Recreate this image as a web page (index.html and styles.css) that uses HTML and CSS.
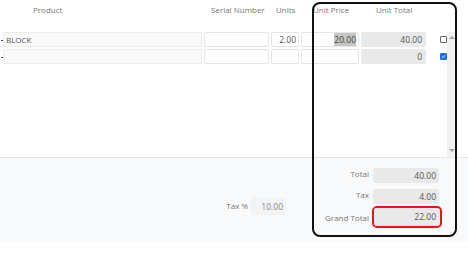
FILE: index.html
```html
<!DOCTYPE html>
<html>
<head>
<meta charset="utf-8">
<link rel="stylesheet" href="styles.css">
</head>
<body>
<div class="page">
  <div class="head cols">
    <div class="h h-product">Product</div>
    <div class="h h-serial">Serial Number</div>
    <div class="h h-units">Units</div>
    <div class="h h-price">Unit Price</div>
    <div class="h h-total">Unit Total</div>
  </div>
  <div class="body">
    <div class="rows">
      <div class="row cols">
        <div class="cell product"><span class="handle"></span>BLOCK</div>
        <div class="cell plain"></div>
        <div class="cell plain num">2.00</div>
        <div class="cell plain num"><span class="sel">20.00</span></div>
        <div class="cell ro num">40.00</div>
        <div class="chk"><span class="box"></span></div>
      </div>
      <div class="row cols">
        <div class="cell product"><span class="handle"></span></div>
        <div class="cell plain"></div>
        <div class="cell plain num"></div>
        <div class="cell plain num"></div>
        <div class="cell ro num">0</div>
        <div class="chk"><span class="box on"><svg viewBox="0 0 8 8" width="7" height="7"><path d="M1.5 4.2 L3.2 5.8 L6.6 2" fill="none" stroke="#fff" stroke-width="1.4"/></svg></span></div>
      </div>
    </div>
    <div class="scrollbar"><span class="arr up"></span><span class="arr down"></span></div>
  </div>
  <div class="footer">
    <div class="taxgroup">
      <span class="lbl">Tax %</span>
      <div class="field tax-in">10.00</div>
    </div>
    <div class="totals">
      <span class="lbl">Total</span>
      <div class="field">40.00</div>
      <span class="lbl">Tax</span>
      <div class="field">4.00</div>
      <span class="lbl">Grand Total</span>
      <div class="redwrap"><div class="field grand">22.00</div></div>
    </div>
  </div>
  <div class="highlight"></div>
</div>
</body>
</html>
```
FILE: styles.css
```css
* { box-sizing: border-box; }
html, body { margin: 0; padding: 0; background: #fff; }
body { font-family: "Open Sans", "Liberation Sans", sans-serif; color: #555; }
.page { position: relative; width: 468px; height: 279px; overflow: hidden; }

.cols {
  display: grid;
  grid-template-columns: 199px 65px 28px 58px 65px 1fr;
  column-gap: 2px;
}
.head { height: 32px; padding-left: 3px; padding-right: 21px; }
.h { font-size: 8px; color: #777; padding-top: 4px; line-height: 12px; white-space: nowrap; }
.h-product { padding-left: 30px; }
.h-serial { padding-left: 7px; }
.h-units { padding-left: 5px; }
.h-price { padding-left: 12px; }
.h-total { padding-left: 15px; }

.body { display: flex; height: 125px; }
.rows { flex: 1; padding-left: 3px; display: flex; flex-direction: column; gap: 2px; }
.row { height: 15px; }
.cell {
  height: 15px;
  font-size: 8.5px;
  line-height: 13px;
  border-radius: 2px;
  white-space: nowrap;
}
.product {
  position: relative;
  background: #f9f9f9;
  border: 1px solid #ececec;
  padding-left: 2px;
  font-size: 8px;
  color: #555;
}
.handle {
  position: absolute;
  left: -3px;
  top: 7px;
  width: 2px;
  height: 1px;
  background: #3b4a6b;
}
.plain { background: #fff; border: 1px solid #e4e4e4; }
.num { text-align: right; padding-right: 2px; }
.ro { background: #e9e9e9; border: 1px solid #e9e9e9; padding-right: 3px; }
.sel { background: #c6c6c6; color: #444; padding: 1px 0; }
.chk { display: flex; align-items: center; padding-left: 12px; }
.box {
  width: 7px; height: 7px;
  border: 1px solid #666;
  border-radius: 1px;
  background: #fff;
  display: flex; align-items: center; justify-content: center;
}
.box.on { background: #1a6fe0; border-color: #1a6fe0; }
.box svg { display: block; }

.scrollbar {
  width: 9px;
  margin-right: 12px;
  background: #f1f1f1;
  display: flex; flex-direction: column; justify-content: space-between; align-items: center;
  padding: 4px 0 5px;
}
.arr { width: 0; height: 0; border-left: 3px solid transparent; border-right: 3px solid transparent; }
.up { border-bottom: 3px solid #a3a3a3; }
.down { border-top: 3px solid #a3a3a3; }

.footer {
  height: 85px;
  border-top: 1px solid #e4e4e4;
  background: #f8f9fa;
  display: flex;
  justify-content: flex-end;
  align-items: flex-start;
  padding: 10px 29px 0 0;
}
.lbl { font-size: 8px; color: #777; line-height: 12px; white-space: nowrap; }
.field {
  height: 15px;
  background: #e9e9e9;
  border-radius: 3px;
  font-size: 8.5px;
  line-height: 15px;
  text-align: right;
  padding-right: 3px;
  color: #555;
}
.taxgroup { display: flex; align-items: flex-start; gap: 3px; margin-top: 30px; margin-right: 39px; }
.taxgroup .lbl { padding-top: 2px; }
.tax-in { width: 35px; height: 17px; line-height: 17px; background: #f2f3f4; color: #888; }
.totals {
  display: grid;
  grid-template-columns: auto 66px;
  column-gap: 4px;
  row-gap: 6px;
  align-items: center;
}
.totals .lbl { text-align: right; margin-top: -3px; }
.redwrap {
  margin-top: -4px;
  margin-left: -1px;
  margin-right: -3px;
  border: 2px solid #e8131b;
  border-radius: 5px;
  padding: 0 1px 0 0;
}
.grand { height: 18px; line-height: 18px; }

.highlight {
  position: absolute;
  left: 312px;
  right: 11px;
  top: 2px;
  height: 235px;
  border: 2px solid #111;
  border-radius: 8px;
  pointer-events: none;
}
```
